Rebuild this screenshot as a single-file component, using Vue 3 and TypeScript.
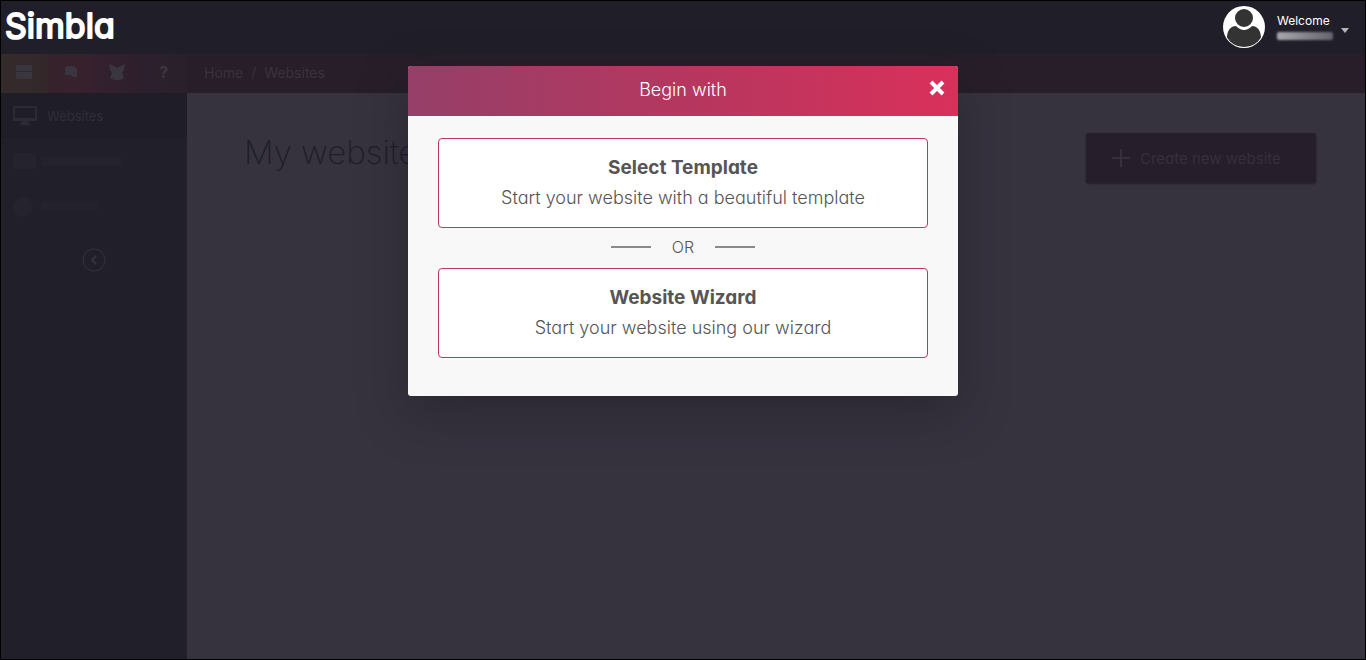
<script setup lang="ts">
interface Choice {
  title: string
  text: string
}

const template: Choice = {
  title: 'Select Template',
  text: 'Start your website with a beautiful template',
}
const wizard: Choice = {
  title: 'Website Wizard',
  text: 'Start your website using our wizard',
}
</script>

<template>
  <div class="page">
    <header class="top">
      <a class="logo" href="#" aria-label="Simbla">
        <svg width="116" height="44" viewBox="0 0 116 44">
          <text x="0" y="33" class="logo-text">Simbla</text>
        </svg>
      </a>
      <button class="account" type="button">
        <svg class="avatar" width="42" height="42" viewBox="0 0 42 42" aria-hidden="true">
          <defs>
            <clipPath id="avatar-clip"><circle cx="21" cy="21" r="20" /></clipPath>
          </defs>
          <circle cx="21" cy="21" r="21" fill="#fff" />
          <g clip-path="url(#avatar-clip)" fill="#333">
            <path d="M4 32C4 24 8 20 13 20C15 22 18 24 21 24C24 24 27 22 29 20C34 20 38 24 38 32C35 38 29 41 21 41C13 41 7 38 4 32Z" />
            <circle cx="21" cy="12" r="10" stroke="#fff" stroke-width="2" />
          </g>
        </svg>
        <span class="who">
          <span>Welcome</span>
          <span class="masked"></span>
        </span>
        <span class="caret"></span>
      </button>
    </header>

    <div class="columns">
      <aside class="side">
        <div class="tools">
          <button type="button" class="t1" aria-label="Mail">
            <svg width="18" height="14" viewBox="0 0 18 14"><path d="M1 0H17V6H1ZM1 7H17V14H1Z" /></svg>
          </button>
          <button type="button" class="t2" aria-label="Chat">
            <svg width="14" height="14" viewBox="0 0 14 14"><path d="M1 4Q1 1 4 1H9Q13 2 13 6V12H9L7 10H1Z" /></svg>
          </button>
          <button type="button" class="t3" aria-label="Rewards">
            <svg width="18" height="18" viewBox="0 0 18 18"><path d="M1 1L6 3L9 5L12 3L17 1L16 7L14 10L16 15L12 17H6L2 15L4 10L2 7Z" /></svg>
          </button>
          <button type="button" class="t4" aria-label="Help">?</button>
        </div>
        <nav class="menu">
          <a href="#" class="item active">
            <svg width="26" height="22" viewBox="0 0 26 22">
              <path fill-rule="evenodd" d="M2 1H24Q25 1 25 2V15Q25 16 24 16H16V18H18V20H8V18H10V16H2Q1 16 1 15V2Q1 1 2 1ZM3 3V13H23V3Z" />
            </svg>
            <span>Websites</span>
          </a>
          <a href="#" class="item" aria-label="Second section">
            <svg width="26" height="22" viewBox="0 0 26 22"><rect x="1" y="3" width="23" height="16" rx="2" /></svg>
            <span class="faint wide"></span>
          </a>
          <a href="#" class="item" aria-label="Third section">
            <svg width="26" height="22" viewBox="0 0 26 22"><circle cx="11" cy="12" r="10" /></svg>
            <span class="faint"></span>
          </a>
        </nav>
        <button type="button" class="collapse" aria-label="Collapse menu">
          <svg width="24" height="24" viewBox="0 0 24 24" fill="none" stroke="#35333d">
            <circle cx="12" cy="12" r="11" />
            <path d="M14 8L10 12L14 16" stroke-width="2" />
          </svg>
        </button>
      </aside>

      <main class="main">
        <nav class="crumbs">
          <a href="#">Home</a><span>/</span><a href="#">Websites</a>
        </nav>
        <div class="heading">
          <h1>My websites</h1>
          <button type="button" class="create">
            <svg width="18" height="18" viewBox="0 0 18 18" stroke="#382f3b" stroke-width="2"><path d="M9 0V18M0 9H18" /></svg>
            Create new website
          </button>
        </div>
      </main>
    </div>

    <div class="overlay">
      <section class="dialog" role="dialog" aria-labelledby="dialog-title">
        <header class="dialog-head">
          <h2 id="dialog-title">Begin with</h2>
          <button type="button" class="close" aria-label="Close">
            <svg width="16" height="16" viewBox="0 0 16 16" stroke="#fff" stroke-width="4"><path d="M2 2L14 14M14 2L2 14" /></svg>
          </button>
        </header>
        <div class="dialog-body">
          <button type="button" class="choice">
            <strong>{{ template.title }}</strong>
            <span>{{ template.text }}</span>
          </button>
          <div class="or"><i></i><span>OR</span><i></i></div>
          <button type="button" class="choice">
            <strong>{{ wizard.title }}</strong>
            <span>{{ wizard.text }}</span>
          </button>
        </div>
      </section>
    </div>
  </div>
</template>

<style>
body {
  background: #36333f;
}
</style>

<style scoped>
* {
  box-sizing: border-box;
}
.page {
  position: relative;
  display: flex;
  flex-direction: column;
  min-height: 100vh;
  border: 1px solid #000;
  background: #36333f;
  font-family: Inter, "Open Sans", sans-serif;
  font-feature-settings: "cv11";
}
button {
  border: 0;
  padding: 0;
  background: none;
  color: inherit;
  font: inherit;
  font-feature-settings: inherit;
  cursor: pointer;
}
a {
  color: inherit;
  text-decoration: none;
}
svg {
  display: block;
  flex: none;
}
h1,
h2 {
  margin: 0;
}
.top {
  display: flex;
  justify-content: space-between;
  align-items: center;
  height: 53px;
  padding: 0 16px 2px 4px;
  background: #201f29;
}
.logo-text {
  font-size: 34px;
  font-weight: 400;
  fill: #fff;
  stroke: #fff;
  stroke-width: 2px;
  stroke-linejoin: round;
}
.account {
  display: flex;
  align-items: center;
  color: #fff;
}
.who {
  display: flex;
  flex-direction: column;
  gap: 4px;
  margin-left: 12px;
  font-size: 12px;
  line-height: 14px;
  text-align: left;
}
.masked {
  width: 56px;
  height: 8px;
  border-radius: 2px;
  background: linear-gradient(90deg, #a8a7ad, #65646d);
  filter: blur(1px);
}
.caret {
  margin: 8px 0 0 8px;
  border: 4px solid transparent;
  border-top: 5px solid #b5b4b9;
  border-bottom: 0;
}
.columns {
  display: flex;
  flex: 1;
}
.side {
  width: 186px;
  background: #211f29;
}
.tools {
  display: grid;
  grid-template-columns: repeat(4, 1fr);
  height: 39px;
}
.tools button {
  display: flex;
  align-items: center;
  justify-content: center;
  padding-bottom: 3px;
  color: #3a3640;
  font-size: 16px;
  font-weight: 700;
}
.tools svg {
  fill: #3a3640;
}
.t1 {
  background: linear-gradient(90deg, #342b2b, #33272a);
}
.t2 {
  background: linear-gradient(90deg, #35222b, #38212e);
}
.t3 {
  background: linear-gradient(90deg, #34202e, #2e1f2d);
}
.t4 {
  background: linear-gradient(90deg, #2d202e, #29202b);
}
.item {
  display: flex;
  align-items: center;
  gap: 9px;
  height: 45px;
  padding-left: 11px;
  color: #302e38;
  font-size: 13px;
}
.item svg {
  fill: #25232d;
}
.active {
  background: #1f1d27;
}
.active svg {
  fill: #2c2a34;
}
.faint {
  width: 56px;
  height: 8px;
  margin-left: -6px;
  background: #24222c;
}
.wide {
  width: 80px;
}
.collapse {
  display: block;
  margin: 20px auto 0;
}
.main {
  flex: 1;
}
.crumbs {
  display: flex;
  align-items: center;
  gap: 8px;
  height: 39px;
  padding: 0 0 3px 17px;
  background: #271e29;
  color: #3a323d;
  font-size: 14px;
}
.heading {
  display: flex;
  justify-content: space-between;
  align-items: center;
  padding: 39px 49px 0 57px;
}
h1 {
  margin-bottom: 12px;
  color: #1f1d28;
  font-size: 33px;
  line-height: 40px;
  font-weight: 200;
}
.create {
  display: flex;
  align-items: center;
  gap: 10px;
  width: 230px;
  height: 50px;
  padding-left: 26px;
  border-radius: 3px;
  background: #261e2a;
  box-shadow: 0 1px 2px #211f29;
  color: #382f3b;
  font-size: 15px;
}
.overlay {
  position: absolute;
  inset: 0;
  padding-top: 65px;
}
.dialog {
  width: 550px;
  max-width: 100%;
  margin: 0 auto;
  border-radius: 3px;
  background: #f8f8f8;
  box-shadow: 0 16px 50px rgba(22, 20, 30, 0.4);
}
.dialog-head {
  display: grid;
  grid-template-columns: 30px 1fr 30px;
  align-items: center;
  height: 50px;
  padding: 0 6px;
  border-radius: 3px 3px 0 0;
  background: linear-gradient(90deg, #953f68, #b5375f 50%, #d9305a);
  color: #fff;
}
h2 {
  grid-column: 2;
  padding-bottom: 3px;
  font-size: 18px;
  font-weight: 300;
  text-align: center;
}
.close {
  display: flex;
  justify-content: center;
  padding-bottom: 6px;
}
.dialog-body {
  padding: 22px 30px 38px;
  color: #555;
}
.choice {
  display: flex;
  flex-direction: column;
  align-items: center;
  justify-content: center;
  width: 100%;
  height: 90px;
  border: 1px solid #bd3563;
  border-radius: 4px;
  background: #fff;
  font-size: 18px;
  line-height: 30px;
  font-weight: 300;
}
.choice strong {
  font-size: 19px;
  font-weight: 700;
}
.or {
  display: flex;
  align-items: center;
  justify-content: center;
  gap: 21px;
  height: 40px;
  padding-bottom: 3px;
  font-size: 16px;
  font-weight: 300;
}
.or i {
  width: 40px;
  height: 2px;
  background: #8a8a8a;
}
</style>
